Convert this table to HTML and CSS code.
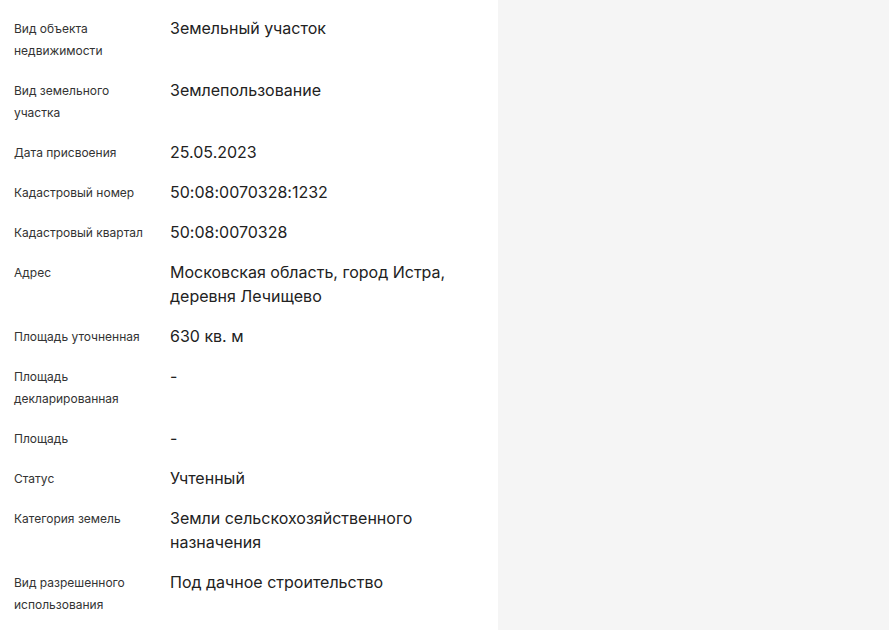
FILE: index.html
```html
<!DOCTYPE html>
<html lang="ru">
<head>
<meta charset="utf-8">
<link rel="stylesheet" href="styles.css">
</head>
<body>
<div class="layout">
  <section class="panel">
    <dl class="props">
      <div class="row"><dt>Вид объекта недвижимости</dt><dd>Земельный участок</dd></div>
      <div class="row"><dt>Вид земельного участка</dt><dd>Землепользование</dd></div>
      <div class="row"><dt>Дата присвоения</dt><dd>25.05.2023</dd></div>
      <div class="row"><dt>Кадастровый номер</dt><dd>50:08:0070328:1232</dd></div>
      <div class="row"><dt>Кадастровый квартал</dt><dd>50:08:0070328</dd></div>
      <div class="row"><dt>Адрес</dt><dd>Московская область, город Истра, деревня Лечищево</dd></div>
      <div class="row"><dt>Площадь уточненная</dt><dd>630 кв. м</dd></div>
      <div class="row"><dt>Площадь декларированная</dt><dd>-</dd></div>
      <div class="row"><dt>Площадь</dt><dd>-</dd></div>
      <div class="row"><dt>Статус</dt><dd>Учтенный</dd></div>
      <div class="row"><dt>Категория земель</dt><dd>Земли сельскохозяйственного назначения</dd></div>
      <div class="row"><dt>Вид разрешенного использования</dt><dd>Под дачное строительство</dd></div>
    </dl>
  </section>
  <aside class="side"></aside>
</div>
</body>
</html>
```
FILE: styles.css
```css
html, body {
  margin: 0;
  padding: 0;
  height: 100%;
}
body {
  font-family: Inter, "Noto Sans", sans-serif;
  background: #f5f5f5;
  color: #222;
  font-feature-settings: "calt" 0;
}
.layout {
  display: flex;
  min-height: 100%;
}
.panel {
  width: 498px;
  flex: none;
  background: #fff;
  box-sizing: border-box;
  padding: 16px 20px 0 14px;
}
.side {
  flex: 1;
  background: #f5f5f5;
}
.props {
  margin: 0;
  display: flex;
  flex-direction: column;
  gap: 16px;
}
.row {
  display: grid;
  grid-template-columns: 156px 1fr;
}
dt {
  margin: 2px 0 0;
  font-size: 12px;
  line-height: 22px;
  color: #333;
  padding-right: 16px;
}
dd {
  margin: 0;
  font-size: 16px;
  line-height: 24px;
  color: #222;
}
```
